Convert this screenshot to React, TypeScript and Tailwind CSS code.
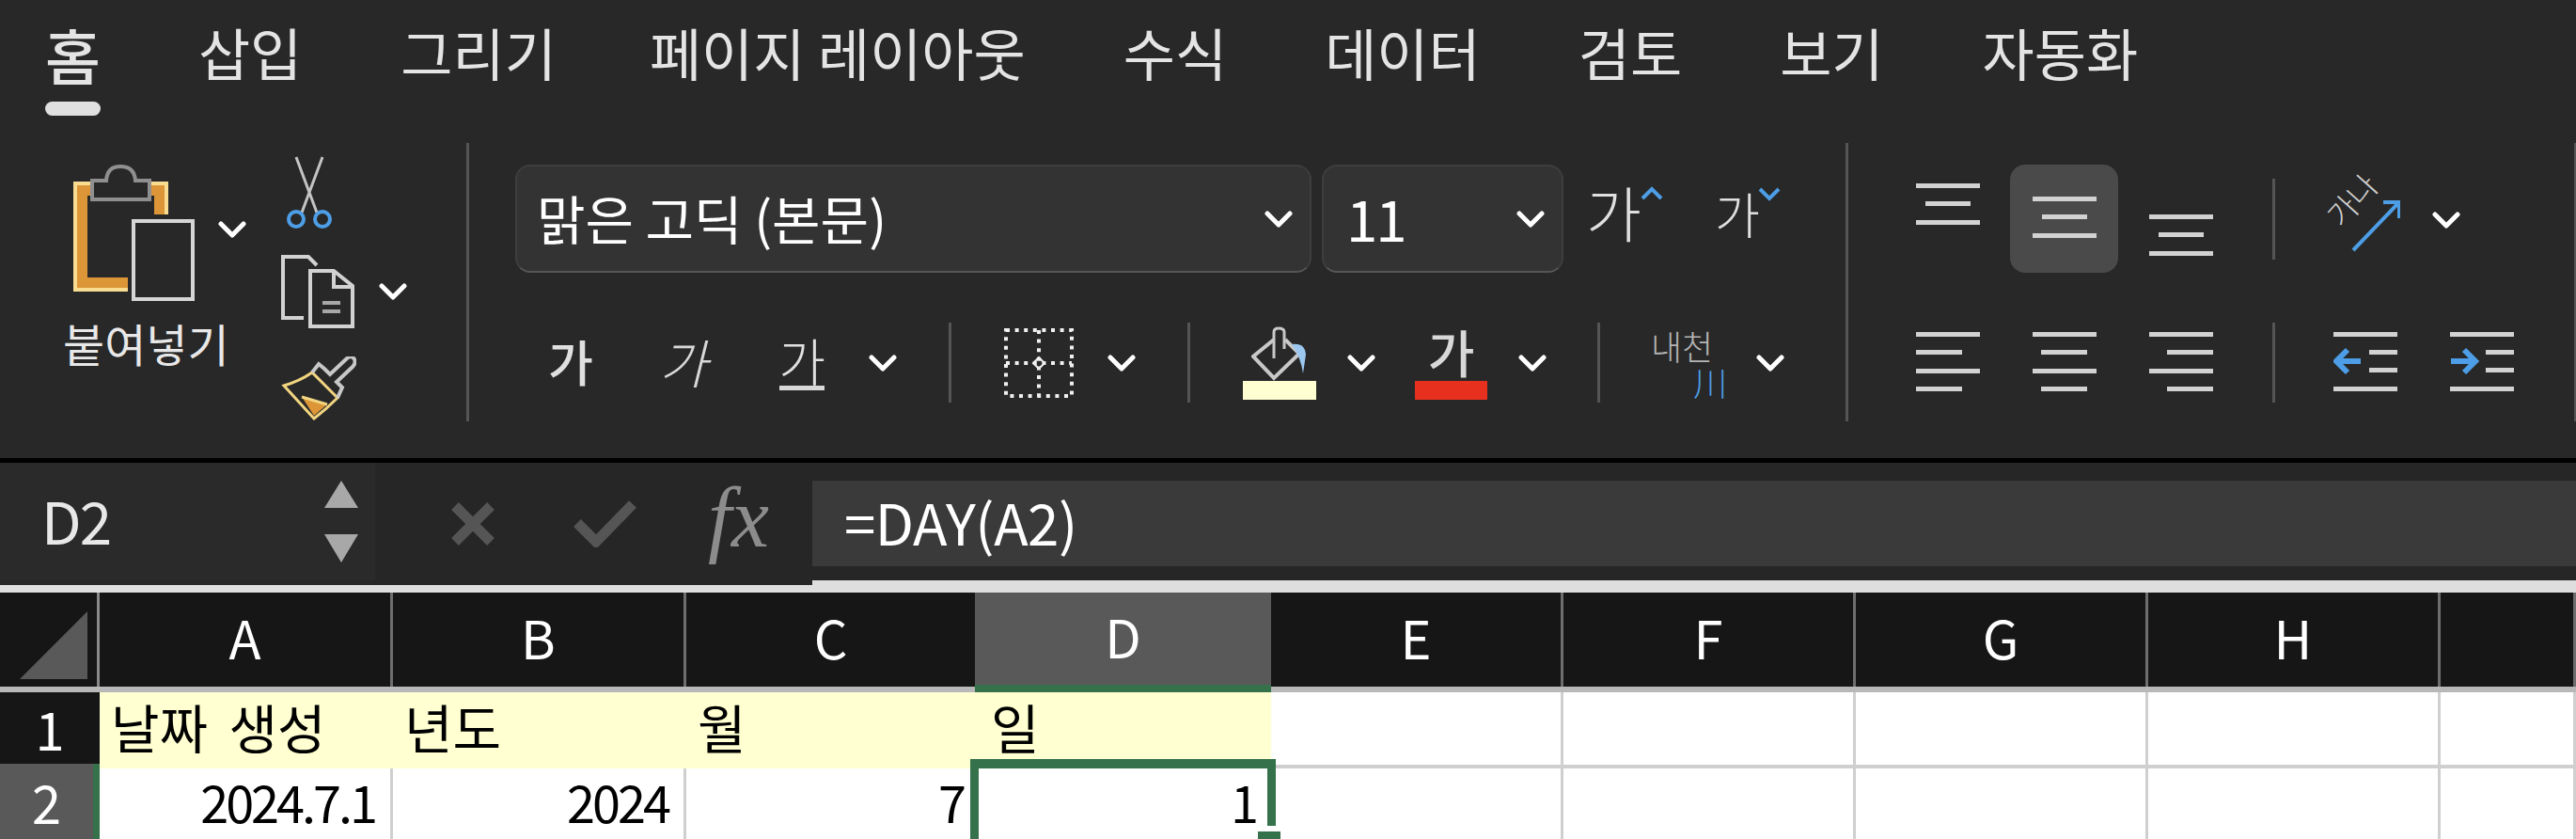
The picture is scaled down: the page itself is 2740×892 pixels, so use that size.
import React from 'react';

const COLUMNS = [
  { label: 'A', width: 'w-[312px]' },
  { label: 'B', width: 'w-[312px]' },
  { label: 'C', width: 'w-[307px]' },
  { label: 'D', width: 'w-[315px]' },
  { label: 'E', width: 'w-[311px]' },
  { label: 'F', width: 'w-[311px]' },
  { label: 'G', width: 'w-[311px]' },
  { label: 'H', width: 'w-[311px]' },
  { label: '', width: 'w-[144px]' },
];

const TABS = [
  { label: '홈', gap: '' },
  { label: '삽입', gap: 'ml-[104px]' },
  { label: '그리기', gap: 'ml-[105px]' },
  { label: '페이지 레이아웃', gap: 'ml-[99px]' },
  { label: '수식', gap: 'ml-[104px]' },
  { label: '데이터', gap: 'ml-[104px]' },
  { label: '검토', gap: 'ml-[104px]' },
  { label: '보기', gap: 'ml-[104px]' },
  { label: '자동화', gap: 'ml-[105px]' },
];

function Chevron({ className = '' }: { className?: string }) {
  return (
    <svg width="30" height="20" viewBox="0 0 30 20" className={`shrink-0 ${className}`}>
      <polyline points="3,4 15,16 27,4" fill="none" stroke="#fff" strokeWidth="5" strokeLinejoin="round" strokeLinecap="round" />
    </svg>
  );
}

function Divider({ className = '' }: { className?: string }) {
  return <div className={`w-[3px] shrink-0 bg-[#555555] ${className}`} />;
}

// stack of horizontal bars used by the alignment buttons
function Bars({ widths, align }: { widths: string[]; align: string }) {
  return (
    <div className={`flex w-[68px] flex-col gap-[14.3px] ${align}`}>
      {widths.map((w, i) => (
        <div key={i} className={`h-[5px] bg-[#d2d2d2] ${w}`} />
      ))}
    </div>
  );
}

function PasteIcon() {
  return (
    <svg width="130" height="146" viewBox="78 175 130 146" className="shrink-0">
      <path d="M78 193 H179 V228 H164 V208 H93 V295 H136 V310 H78 Z" fill="#dc9637" />
      <path d="M136 308 H80 V195 H177 V228" fill="none" stroke="#f8dc92" strokeWidth="4" />
      <path d="M98 212 V192 H113 Q114 177 128 177 Q143 177 144 192 H159 V212 Z" fill="#282828" stroke="#8f8f8f" strokeWidth="4" />
      <rect x="142" y="235" width="63" height="83" fill="#282828" stroke="#d6d6d6" strokeWidth="4" />
    </svg>
  );
}

function ScissorsIcon() {
  return (
    <svg width="60" height="80" viewBox="307 166 60 80" className="mt-[14px] shrink-0">
      <path d="M323 167 L345 226 M351 167 L329 226" fill="none" stroke="#c4c4c4" strokeWidth="3" />
      <circle cx="323" cy="233" r="8" fill="none" stroke="#4d9ee6" strokeWidth="4" />
      <circle cx="351" cy="233" r="8" fill="none" stroke="#4d9ee6" strokeWidth="4" />
    </svg>
  );
}

function CopyIcon() {
  return (
    <svg width="80" height="80" viewBox="298 270 80 80" className="shrink-0">
      <path d="M322 338 H300 V273 H327 L336 282" fill="none" stroke="#d2d2d2" strokeWidth="4" />
      <path d="M329 288 H354 L374 304 V347 H329 Z" fill="none" stroke="#d2d2d2" strokeWidth="4" />
      <path d="M354 288 V305 H374" fill="none" stroke="#d2d2d2" strokeWidth="4" />
      <path d="M342 322 H361 M342 331 H361" fill="none" stroke="#a8a8a8" strokeWidth="4" />
    </svg>
  );
}

function PainterIcon() {
  return (
    <svg width="80" height="70" viewBox="298 379 80 70" className="shrink-0">
      <path d="M320 422 L347 430 L333 442 Z" fill="#dc9637" />
      <path d="M301 410 Q318 405 331 396 L358 423 Q346 435 333 445 Z" fill="none" stroke="#f2d581" strokeWidth="3" />
      <path d="M320 422 L347 430" fill="none" stroke="#f2d581" strokeWidth="3" />
      <path d="M331 396 L338 387 L344 392 L350 398 L368 381 Q373 377 376 382 Q378 386 374 390 L357 406 L363 412 L358 423" fill="none" stroke="#c8c8c8" strokeWidth="4" />
    </svg>
  );
}

function BorderIcon() {
  const dash = { strokeDasharray: '4 5.6', stroke: '#f0f0f0', strokeWidth: 4, fill: 'none' };
  return (
    <svg width="74" height="74" viewBox="0 0 74 74" className="shrink-0">
      <rect x="2" y="2" width="70" height="70" {...dash} />
      <path d="M37 2 V72 M2 37 H72" {...dash} />
      <path d="M37 31 L43 37 L37 43 L31 37 Z" fill="none" stroke="#f0f0f0" strokeWidth="2" />
    </svg>
  );
}

function FillIcon() {
  return (
    <svg width="60" height="58" viewBox="1335 348 60 58" className="shrink-0">
      <path d="M1359 362 L1337 380 L1359 403 L1386 377 L1371 362" fill="none" stroke="#c8c8c8" strokeWidth="4" />
      <path d="M1359 382 V354 Q1359 350 1364 350 Q1370 350 1370 354 V372" fill="none" stroke="#c8c8c8" strokeWidth="3" />
      <path d="M1378 367 Q1392 365 1393 378 L1390 398 Q1388 382 1378 367 Z" fill="#9cc8f0" />
    </svg>
  );
}

function OrientationIcon() {
  return (
    <div className="relative h-[80px] w-[77px] shrink-0">
      <div className="absolute left-[-5px] top-[4px] -rotate-[48deg] text-[33px] leading-none font-light text-[#d0d0d0]">
        가나
      </div>
      <svg width="77" height="80" viewBox="2477 192 77 80" className="absolute left-0 top-0">
        <path d="M2504 266 L2553 215 M2536 215 H2553 V232" fill="none" stroke="#4d9ee6" strokeWidth="4" />
      </svg>
    </div>
  );
}

function IndentIcon({ increase }: { increase?: boolean }) {
  const shortX = 38;
  return (
    <svg width="68" height="66" viewBox="0 0 68 66" className="shrink-0">
      <rect x="0" y="0" width="68" height="5" fill="#d2d2d2" />
      <rect x={shortX} y="19" width="30" height="5" fill="#d2d2d2" />
      <rect x={shortX} y="38" width="30" height="5" fill="#d2d2d2" />
      <rect x="0" y="58" width="68" height="5" fill="#d2d2d2" />
      {increase ? (
        <path d="M1 31 H26 M15 19 L27 31 L15 43" fill="none" stroke="#4d9ee6" strokeWidth="6" />
      ) : (
        <path d="M29 31 H4 M15 19 L3 31 L15 43" fill="none" stroke="#4d9ee6" strokeWidth="6" />
      )}
    </svg>
  );
}

function Caret({ down }: { down?: boolean }) {
  return (
    <svg width="24" height="16" viewBox="0 0 24 16" className="shrink-0">
      <polyline points={down ? '2,3 12,13 22,3' : '2,13 12,3 22,13'} fill="none" stroke="#4d9ee6" strokeWidth="4" />
    </svg>
  );
}

function SelectBox({ label, width, pad, text }: { label: string; width: string; pad: string; text: string }) {
  return (
    <div className={`flex h-[115px] items-center justify-between rounded-[16px] border-[2px] border-[#3e3e3e] border-b-[#555555] bg-[#333333] pr-[18px] ${width} ${pad}`}>
      <span className={`pb-[4px] leading-none text-white ${text}`}>{label}</span>
      <Chevron />
    </div>
  );
}

function ClipboardGroup() {
  return (
    <div className="flex h-[296px] w-[496px] shrink-0">
      <div className="w-[299px] shrink-0">
        <div className="flex pl-[78px] pt-[23px]">
          <PasteIcon />
          <Chevron className="ml-[24px] mt-[59px]" />
        </div>
        <div className="ml-[67px] mt-[19px] text-[48px] leading-none text-[#e8e8e8]">붙여넣기</div>
      </div>
      <div className="flex flex-col">
        <ScissorsIcon />
        <div className="mt-[24px] flex">
          <CopyIcon />
          <Chevron className="ml-[24px] mt-[30px]" />
        </div>
        <div className="mt-[29px]">
          <PainterIcon />
        </div>
      </div>
    </div>
  );
}

function FontGroup() {
  return (
    <div className="flex h-[296px] w-[1464px] shrink-0 flex-col">
      <div className="mt-[23px] flex h-[115px]">
        <SelectBox label="맑은 고딕 (본문)" width="ml-[49px] w-[847px]" pad="pl-[21px]" text="text-[56px]" />
        <SelectBox label="11" width="ml-[11px] w-[257px]" pad="pl-[24px]" text="text-[60px] tracking-[-2px]" />
        <div className="ml-[24px] mt-[17px] w-[58px] text-[64px] leading-none font-light text-[#e0e0e0]">가</div>
        <div className="mt-[23px]">
          <Caret />
        </div>
        <div className="ml-[55px] mt-[26px] w-[46px] text-[52px] leading-none font-light text-[#e0e0e0]">가</div>
        <div className="mt-[23px]">
          <Caret down />
        </div>
      </div>
      <div className="mt-[53px] flex h-[85px] items-center">
        <div className="ml-[81px] w-[54px] pb-[4px] text-center text-[52px] leading-none font-medium text-[#e0e0e0]">가</div>
        <div className="ml-[64px] w-[57px] pb-[4px] text-center text-[56px] leading-none font-light italic text-[#d8d8d8]">가</div>
        <div className="ml-[70px] flex w-[56px] flex-col items-center">
          <span className="text-[54px] leading-none font-light text-[#e0e0e0]">가</span>
          <div className="h-[5px] w-[48px] bg-[#d8d8d8]" />
        </div>
        <Chevron className="ml-[43px]" />
        <Divider className="ml-[55px] h-[85px]" />
        <div className="ml-[56px]">
          <BorderIcon />
        </div>
        <Chevron className="ml-[36px]" />
        <Divider className="ml-[55px] h-[85px]" />
        <div className="ml-[56px] flex w-[78px] flex-col items-center">
          <FillIcon />
          <div className="h-[20px] w-[78px] bg-[#ffffd1]" />
        </div>
        <Chevron className="ml-[33px]" />
        <div className="ml-[42px] flex w-[77px] flex-col items-center">
          <span className="h-[58px] text-[54px] leading-none font-medium text-[#d8d8d8]">가</span>
          <div className="h-[20px] w-[77px] bg-[#e8301f]" />
        </div>
        <Chevron className="ml-[33px]" />
        <Divider className="ml-[54px] h-[85px]" />
        <div className="ml-[56px] flex w-[79px] flex-col leading-none">
          <span className="-ml-[2px] text-[36px] font-light text-[#b4b4b4]">내천</span>
          <span className="mt-[2px] self-end text-[36px] font-light text-[#4d9ee6]">川</span>
        </div>
        <Chevron className="ml-[31px]" />
      </div>
    </div>
  );
}

function AlignmentGroup() {
  const cell = 'flex h-[115px] w-[115px] shrink-0 justify-center rounded-[16px]';
  const lower = 'flex h-[85px] w-[115px] shrink-0 justify-center pt-[10px]';
  const topBars = ['w-[68px]', 'w-[48px]', 'w-[68px]'];
  return (
    <div className="flex h-[296px] w-[772px] shrink-0 flex-col">
      <div className="mt-[23px] flex h-[115px]">
        <div className={`ml-[48px] pt-[20px] ${cell}`}>
          <Bars widths={topBars} align="items-center" />
        </div>
        <div className={`ml-[9px] bg-[#4a4a4a] pt-[34px] ${cell}`}>
          <Bars widths={topBars} align="items-center" />
        </div>
        <div className={`ml-[9px] pt-[53px] ${cell}`}>
          <Bars widths={topBars} align="items-center" />
        </div>
        <Divider className="ml-[40px] mt-[15px] h-[86px]" />
        <div className="ml-[56px] mt-[17px]">
          <OrientationIcon />
        </div>
        <Chevron className="ml-[34px] mt-[49px]" />
      </div>
      <div className="mt-[53px] flex h-[85px]">
        <div className={`ml-[48px] ${lower}`}>
          <Bars widths={['w-[68px]', 'w-[49px]', 'w-[68px]', 'w-[49px]']} align="items-start" />
        </div>
        <div className={`ml-[9px] ${lower}`}>
          <Bars widths={['w-[68px]', 'w-[49px]', 'w-[68px]', 'w-[49px]']} align="items-center" />
        </div>
        <div className={`ml-[9px] ${lower}`}>
          <Bars widths={['w-[68px]', 'w-[49px]', 'w-[68px]', 'w-[49px]']} align="items-end" />
        </div>
        <Divider className="ml-[40px] h-[85px]" />
        <div className="ml-[62px] pt-[10px]">
          <IndentIcon />
        </div>
        <div className="ml-[56px] pt-[10px]">
          <IndentIcon increase />
        </div>
      </div>
    </div>
  );
}

function FormulaBar() {
  return (
    <div className="flex h-[138px]">
      <div className="flex w-[864px] shrink-0 flex-col">
        <div className="flex h-[130px] bg-[#262626]">
          <div className="flex h-[125px] w-[399px] shrink-0 items-center justify-between bg-[#2a2a2a] pl-[44px] pr-[18px]">
            <span className="pb-[6px] text-[62px] leading-none tracking-[-2px] text-[#e8e8e8]">D2</span>
            <div className="flex flex-col gap-[28px]">
              <div className="h-0 w-0 border-x-[18px] border-b-[29px] border-x-transparent border-b-[#a8a8a8]" />
              <div className="h-0 w-0 border-x-[18px] border-t-[30px] border-x-transparent border-t-[#a8a8a8]" />
            </div>
          </div>
          <svg width="50" height="50" viewBox="0 0 50 50" className="ml-[79px] mt-[40px] shrink-0">
            <path d="M6 6 L44 44 M44 6 L6 44" stroke="#555555" strokeWidth="11" fill="none" />
          </svg>
          <svg width="68" height="50" viewBox="0 0 68 50" className="ml-[82px] mt-[40px] shrink-0">
            <path d="M4 24 L24 44 L63 4" stroke="#555555" strokeWidth="11" fill="none" />
          </svg>
          <span className="ml-[75px] mt-[14px] font-['Liberation_Serif',serif] text-[90px] leading-none italic text-[#8c8c8c]">
            fx
          </span>
        </div>
        <div className="h-[8px] bg-[#dedede]" />
      </div>
      <div className="flex flex-1 flex-col bg-[#262626]">
        <div className="mt-[19px] flex h-[91px] items-center bg-[#3a3a3a] pb-[6px] pl-[34px] text-[60px] leading-none tracking-[-0.5px] text-white">
          =DAY(A2)
        </div>
        <div className="mt-auto h-[13px] bg-[#dedede]" />
      </div>
    </div>
  );
}

function Sheet() {
  return (
    <div className="flex flex-1 flex-col overflow-hidden">
      {/* column header */}
      <div className="flex h-[106px] shrink-0 border-b-[6px] border-[#b8b8b8] bg-[#161616]">
        <div className="flex h-[100px] w-[106px] shrink-0 items-end border-r-[3px] border-[#8a8a8a] pb-[8px] pl-[21px]">
          <div className="h-[72px] w-[72px] bg-[#595959] [clip-path:polygon(100%_0,100%_100%,0_100%)]" />
        </div>
        {COLUMNS.map((col) => {
          const active = col.label === 'D';
          return (
            <div
              key={col.label}
              className={`flex h-[100px] shrink-0 flex-col ${col.width} ${active ? 'bg-[#595959]' : col.label === 'C' ? '' : 'border-r-[3px] border-[#6e6e6e]'}`}
            >
              <div className="flex flex-1 items-center justify-center pb-[6px] text-[56px] leading-none text-white">{col.label}</div>
              {active && <div className="-mb-[6px] h-[8px] bg-[#35714a]" />}
            </div>
          );
        })}
      </div>

      <div className="flex flex-1">
        {/* row header */}
        <div className="flex w-[106px] shrink-0 flex-col">
          <div className="flex h-[76px] items-center justify-center bg-[#161616] text-[56px] leading-none text-white">1</div>
          <div className="flex flex-1 items-center justify-center border-r-[7px] border-[#35714a] bg-[#595959] text-[56px] leading-none text-white">2</div>
        </div>

        <div className="relative flex-1 bg-white text-black">
          <div className="flex h-[81px]">
            {COLUMNS.map((col, i) => (
              <div
                key={col.label}
                className={`flex shrink-0 items-center pb-[10px] text-[56px] leading-none [word-spacing:10px] ${col.width} ${i === 3 ? 'pl-[17px]' : 'pl-[12px]'} ${i < 4 ? 'bg-[#ffffd1]' : 'border-b-[4px] border-r-[3px] border-[#cfcfcf]'}`}
              >
                {['날짜 생성', '년도', '월', '일'][i]}
              </div>
            ))}
          </div>
          <div className="flex h-[75px]">
            {COLUMNS.map((col, i) => (
              <div
                key={col.label}
                className={`flex shrink-0 items-center justify-end pb-[6px] text-[54px] leading-none tracking-[-3px] ${col.width} ${i === 2 ? 'pr-[12px]' : 'pr-[16px]'} ${i === 2 || i === 3 ? '' : 'border-r-[3px] border-[#cfcfcf]'}`}
              >
                {['2024.7.1', '2024', '7', '1'][i]}
              </div>
            ))}
          </div>
          {/* selected cell D2 */}
          <div className="absolute left-[926px] top-[71px] h-[85px] w-[325px] border-l-[9px] border-t-[10px] border-[#35714a]">
            <div className="absolute -top-[10px] right-0 h-[71px] w-[9px] bg-[#35714a]" />
            <div className="absolute right-[-5px] top-[67px] h-[8px] w-[24px] bg-[#35714a]" />
          </div>
        </div>
      </div>
    </div>
  );
}

export default function App() {
  return (
    <div className="flex h-[892px] w-[2740px] flex-col overflow-hidden bg-[#282828] font-['Noto_Sans_CJK_KR','Noto_Sans',sans-serif]">
      {/* tabs */}
      <div className="flex h-[150px] shrink-0 pl-[48px] pt-[25px]">
        {TABS.map((tab, i) => (
          <div key={tab.label} className={`flex flex-col ${tab.gap}`}>
            <span className={`leading-none text-[#e4e4e4] ${i === 0 ? 'text-[64px] font-medium' : 'text-[60px]'}`}>{tab.label}</span>
            {i === 0 && <div className="mt-[19px] h-[15px] rounded-full bg-[#e0e0e0]" />}
          </div>
        ))}
      </div>

      {/* ribbon */}
      <div className="flex h-[337px] shrink-0 items-start pt-[2px]">
        <ClipboardGroup />
        <Divider className="h-[296px]" />
        <FontGroup />
        <Divider className="h-[296px]" />
        <AlignmentGroup />
        <Divider className="h-[296px]" />
      </div>

      <div className="h-[5px] shrink-0 bg-black" />
      <FormulaBar />
      <Sheet />
    </div>
  );
}
